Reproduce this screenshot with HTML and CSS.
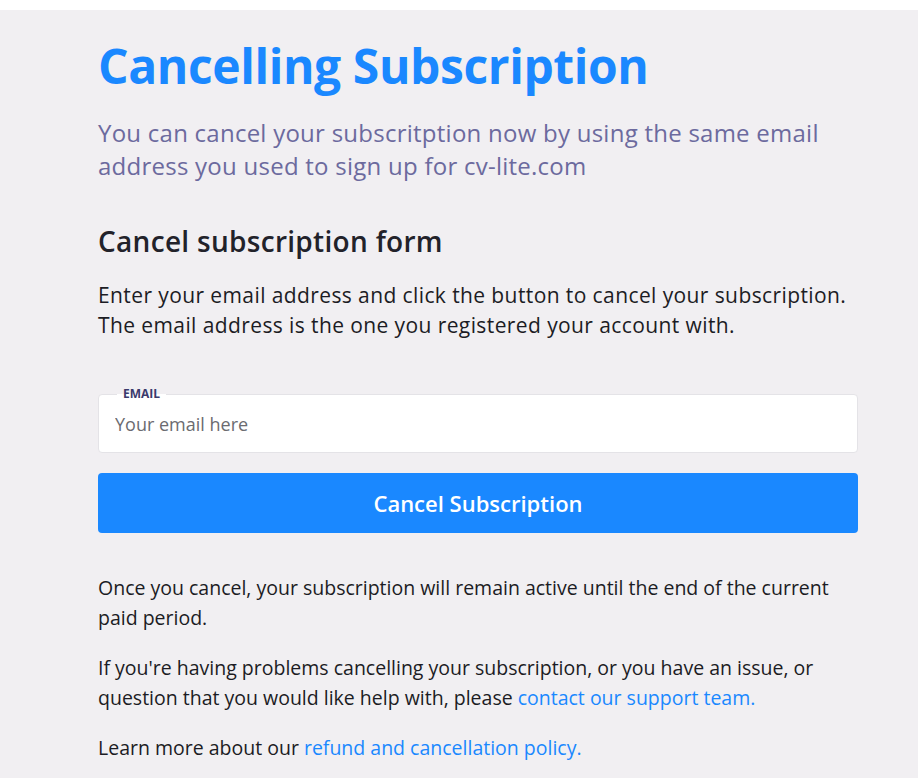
FILE: index.html
```html
<!DOCTYPE html>
<html>
  <head>
    <title>Cancelling Subscription</title>
    <link rel="stylesheet" href="styles.css">
  </head>
<body>
  <div class="page">
    <div class="content">
      <h1 class="title">Cancelling Subscription</h1>
      <p class="lead">You can cancel your subscritption now by using the same email address you used to sign up for cv-lite.com</p>

      <h2 class="formtitle">Cancel subscription form</h2>
      <p class="intro">Enter your email address and click the button to cancel your subscription. The email address is the one you registered your account with.</p>

      <form class="cancelform" onsubmit="return false;">
        <div class="field">
          <label class="fieldlabel" for="email">EMAIL</label>
          <input class="fieldinput" id="email" type="email" placeholder="Your email here">
        </div>
        <button class="cancelbutton" type="submit">Cancel Subscription</button>
      </form>

      <p class="note">Once you cancel, your subscription will remain active until the end of the current paid period.</p>
      <p class="note">If you're having problems cancelling your subscription, or you have an issue, or question that you would like help with, please <a href="#" class="link">contact our support team.</a></p>
      <p class="note">Learn more about our <a href="#" class="link">refund and cancellation policy.</a></p>
    </div>
  </div>
</body>
</html>
```

FILE: styles.css
```css
body{
  margin: 0;
  background-color: white;
  font-family: "Open Sans", "Noto Sans", Arial, sans-serif;
  color: #1c1c24;
}
.page{
  margin-top: 10px;
  background-color: #f1eff2;
  min-height: 768px;
}
.content{
  width: 760px;
  margin-left: 98px;
  padding-top: 26px;
}
.title{
  margin: 0;
  font-size: 48px;
  line-height: 60px;
  font-weight: bold;
  letter-spacing: -0.4px;
  color: #1a88ff;
}
.lead{
  margin: 20px 0 0;
  font-size: 24px;
  line-height: 33px;
  letter-spacing: 0.25px;
  color: #6c6a9e;
}
.formtitle{
  margin: 41px 0 0;
  font-size: 28px;
  line-height: 36px;
  font-weight: 600;
  letter-spacing: 0.3px;
  color: #22222a;
}
.intro{
  margin: 21px 0 0;
  font-size: 21px;
  line-height: 30px;
  letter-spacing: 0.4px;
}
.cancelform{
  margin-top: 54px;
}
.field{
  position: relative;
}
.fieldlabel{
  position: absolute;
  left: 19px;
  top: -7px;
  padding: 0 6px;
  font-size: 12px;
  line-height: 14px;
  font-weight: bold;
  color: #3a3a6c;
  background: linear-gradient(to bottom, #f1eff2 50%, white 50%);
}
.fieldinput{
  display: block;
  box-sizing: border-box;
  width: 100%;
  height: 59px;
  padding: 0 16px;
  border: 1px solid #e4e3e7;
  border-radius: 4px;
  background-color: white;
  font-family: inherit;
  font-size: 18px;
  color: #1c1c24;
}
.fieldinput::placeholder{
  color: #6b6b70;
}
.cancelbutton{
  display: block;
  width: 100%;
  height: 60px;
  margin-top: 20px;
  border: none;
  border-radius: 4px;
  background-color: #1a88ff;
  color: white;
  font-family: inherit;
  font-size: 22px;
  font-weight: 600;
  cursor: pointer;
}
.note{
  margin: 20px 0 0;
  font-size: 19.5px;
  line-height: 30px;
}
.cancelform + .note{
  margin-top: 40px;
}
.link{
  color: #1a88ff;
  text-decoration: none;
}
```
